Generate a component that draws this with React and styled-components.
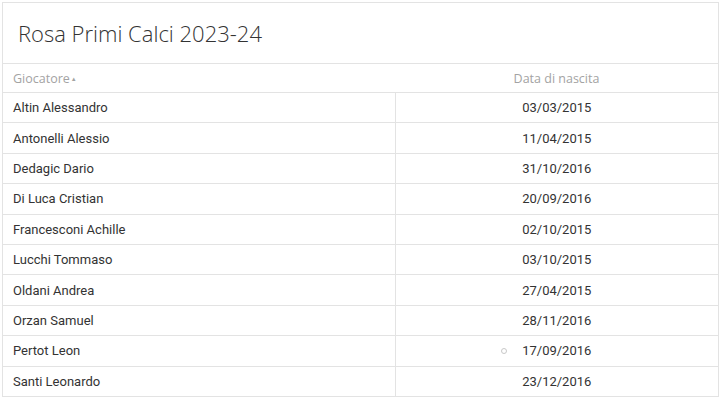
import React from "react";
import styled, { createGlobalStyle } from "styled-components";

const GlobalStyle = createGlobalStyle`
  body {
    margin: 0;
    background: #fff;
    font-family: Roboto, "Liberation Sans", sans-serif;
  }
`;

const Page = styled.div`
  padding: 2px 3px 0 2px;
`;

const Card = styled.div`
  border: 1px solid #e3e3e3;
  background: #fff;
`;

const Title = styled.h1`
  margin: 0;
  height: 61px;
  display: flex;
  align-items: center;
  padding: 0 15px 1px;
  box-sizing: border-box;
  font-family: "Open Sans", sans-serif;
  font-weight: 300;
  font-size: 22px;
  color: #333;
  border-bottom: 1px solid #e3e3e3;
`;

const Table = styled.table`
  width: 100%;
  border-collapse: collapse;
  table-layout: fixed;
`;

const NameCol = styled.col`
  width: 392px;
`;

const HeadCell = styled.th`
  height: 28px;
  padding: 0 10px;
  font-family: "Open Sans", sans-serif;
  font-weight: 400;
  font-size: 12.5px;
  color: #a3a3a3;
  text-align: ${(p) => p.$align || "left"};
  border-bottom: 1px solid #e3e3e3;
`;

const SortArrow = styled.span`
  font-size: 6px;
  vertical-align: 2px;
  margin-left: 1px;
`;

const Row = styled.tr`
  height: 30.4px;
  & + & td {
    border-top: 1px solid #e3e3e3;
  }
`;

const Cell = styled.td`
  padding: 0 10px;
  font-size: 13px;
  color: #333;
  text-align: ${(p) => p.$align || "left"};
  & + & {
    border-left: 1px solid #e3e3e3;
  }
`;

const DateWrap = styled.span`
  position: relative;
`;

const Dot = styled.span`
  position: absolute;
  left: -21px;
  top: 50%;
  width: 4px;
  height: 4px;
  margin-top: -3px;
  border: 1px solid #c8c8c8;
  border-radius: 50%;
`;

const players = [
  ["Altin Alessandro", "03/03/2015"],
  ["Antonelli Alessio", "11/04/2015"],
  ["Dedagic Dario", "31/10/2016"],
  ["Di Luca Cristian", "20/09/2016"],
  ["Francesconi Achille", "02/10/2015"],
  ["Lucchi Tommaso", "03/10/2015"],
  ["Oldani Andrea", "27/04/2015"],
  ["Orzan Samuel", "28/11/2016"],
  ["Pertot Leon", "17/09/2016", true],
  ["Santi Leonardo", "23/12/2016"],
];

export default function App() {
  return (
    <Page>
      <GlobalStyle />
      <Card>
        <Title>Rosa Primi Calci 2023-24</Title>
        <Table>
          <colgroup>
            <NameCol />
            <col />
          </colgroup>
          <thead>
            <tr>
              <HeadCell>
                Giocatore<SortArrow>▲</SortArrow>
              </HeadCell>
              <HeadCell $align="center">Data di nascita</HeadCell>
            </tr>
          </thead>
          <tbody>
            {players.map(([name, date, dot]) => (
              <Row key={name}>
                <Cell>{name}</Cell>
                <Cell $align="center">
                  <DateWrap>
                    {dot && <Dot />}
                    {date}
                  </DateWrap>
                </Cell>
              </Row>
            ))}
          </tbody>
        </Table>
      </Card>
    </Page>
  );
}
